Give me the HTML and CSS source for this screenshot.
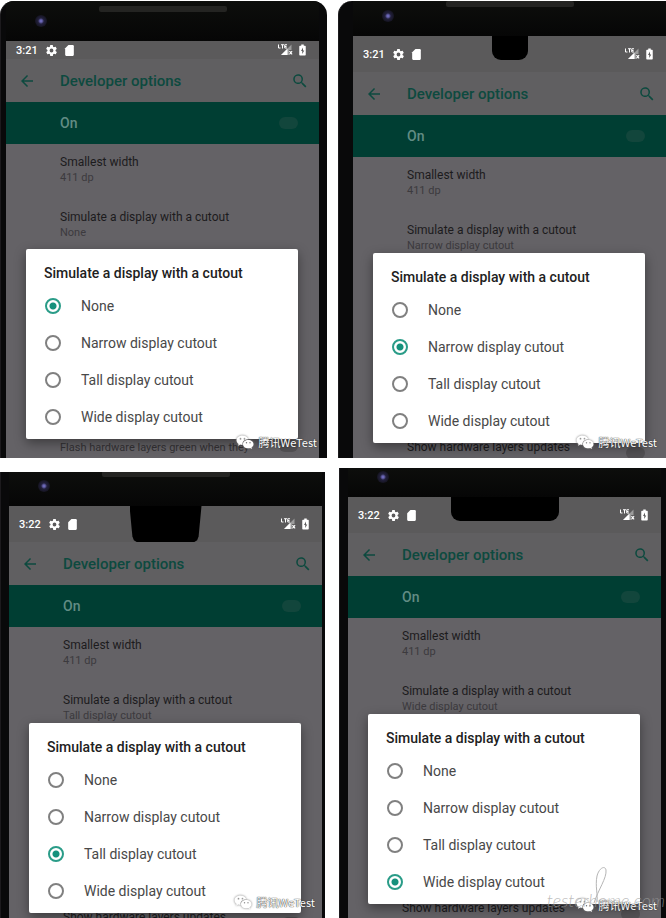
FILE: index.html
```html
<!DOCTYPE html>
<html lang="en">
<head>
<meta charset="UTF-8" />
<meta name="viewport" content="width=device-width, initial-scale=1" />
<title>Simulate a display with a cutout</title>
<link rel="stylesheet" href="styles.css">
</head>
<body>
  <svg class="sprite" aria-hidden="true">
    <symbol id="gear" viewBox="0 0 24 24"><path fill-rule="evenodd" d="M19.4 13a7.500 7.500 0 0 0 0-2l2.100-1.600a.5.5 0 0 0 .1-.6l-2-3.500a.5.5 0 0 0-.6-.2l-2.500 1a7.300 7.300 0 0 0-1.700-1L14.500 2.400A.5.5 0 0 0 14 2h-4a.5.5 0 0 0-.5.400L9.100 5.100a7.700 7.700 0 0 0-1.700 1l-2.500-1a.5.5 0 0 0-.6.200l-2 3.500a.5.5 0 0 0 .1.600L4.600 11a8 8 0 0 0 0 2l-2.100 1.600a.5.5 0 0 0-.1.600l2 3.500c.1.200.4.300.6.200l2.500-1a7.300 7.300 0 0 0 1.700 1l.4 2.700c0 .2.200.4.500.4h4c.2 0 .4-.2.500-.4l.4-2.700a7.700 7.700 0 0 0 1.700-1l2.500 1c.2.100.5 0 .6-.2l2-3.500a.5.5 0 0 0-.1-.6zM12 15.500a3.500 3.500 0 1 1 0-7 3.500 3.500 0 0 1 0 7z"/></symbol>
    <symbol id="card" viewBox="0 0 24 24"><path d="M18 2h-8L4 8v12a2 2 0 0 0 2 2h12a2 2 0 0 0 2-2V4a2 2 0 0 0-2-2z"/></symbol>
    <symbol id="signal" viewBox="0 0 30 24"><path d="M1 1v7h4M6 1.500h6M9 1.500V9M18 1.500h-4.500V8H18M13.500 5H17" fill="none" stroke="currentColor" stroke-width="2"/><path d="M27 1v11h-5v10H6z" opacity=".4"/><path d="M19 9v13H6zM22 15l1.500-1.500 2 2 2-2L29 15l-2 2.500 2 2.500-1.500 1.500-2-2-2 2L22 20l2-2.500z"/></symbol>
    <symbol id="battery" viewBox="0 0 14 24"><path fill-rule="evenodd" d="M4.500 1h5v2.500H12q1.500 0 1.500 1.500v16.500q0 1.500-1.500 1.500H2Q.5 23 .5 21.500V5q0-1.500 1.500-1.500h2.500zM8 7l-4 7h2.500V20l4-7H8z"/></symbol>
    <symbol id="back" viewBox="0 0 24 24"><path d="M20 11H7.800l5.600-5.600L12 4l-8 8 8 8 1.400-1.400L7.800 13H20z"/></symbol>
    <symbol id="search" viewBox="0 0 24 24"><path d="M15.500 14h-.8l-.3-.3a6.500 6.500 0 1 0-.7.700l.3.300v.8l5 5 1.500-1.500zm-6 0a4.500 4.500 0 1 1 0-9 4.500 4.500 0 0 1 0 9z"/></symbol>
    <symbol id="wechat" viewBox="0 0 36 28"><path fill-rule="evenodd" d="M13 1C6 1 1 5.300 1 10.500c0 3 1.600 5.600 4.200 7.300L4 21.500l4.500-2.300q2 .6 4.500.6C12 13 17 8.500 24.500 8.500 23.300 4 18.500 1 13 1zM9 9a1.700 1.700 0 1 1 0-3.400A1.700 1.700 0 0 1 9 9zm8 0a1.700 1.700 0 1 1 0-3.400A1.700 1.700 0 0 1 17 9z"/><path fill-rule="evenodd" d="M24.500 10C18.500 10 14 13.700 14 18.300s4.500 8.300 10.500 8.300q2 0 3.700-.5l3.800 1.700-1-3c2.500-1.600 4-3.800 4-6.500 0-4.600-4.500-8.300-10.500-8.300zM21 17a1.400 1.400 0 1 1 0-2.800 1.400 1.400 0 0 1 0 2.800zm7 0a1.400 1.400 0 1 1 0-2.800 1.400 1.400 0 0 1 0 2.800z"/></symbol>
  </svg>

  <main class="phones" id="phones"></main>

<script>
  (function() {
    const options = ['None', 'Narrow display cutout', 'Tall display cutout', 'Wide display cutout'];
    const phones = [
      { id: 'none', time: '3:21', selected: 0, below: 'Flash hardware layers green when they' },
      { id: 'narrow', time: '3:21', selected: 1, below: 'Show hardware layers updates' },
      { id: 'tall', time: '3:22', selected: 2, below: 'Show hardware layers updates' },
      { id: 'wide', time: '3:22', selected: 3, below: 'Show hardware layers updates' }
    ];

    const icon = name => `<svg class="icon icon-${name}" aria-hidden="true"><use href="#${name}"/></svg>`;

    function renderOption(phone, label, i) {
      return `
        <label class="option">
          <input type="radio" name="cutout-${phone.id}" ${i === phone.selected ? 'checked' : ''}>
          <span>${label}</span>
        </label>`;
    }

    function renderPhone(phone) {
      return `
        <section class="phone phone-${phone.id}">
          <div class="bezel"><span class="camera"></span><span class="speaker"></span></div>
          <div class="screen">
            <div class="status-bar">
              <span class="time">${phone.time}</span>
              ${icon('gear')}${icon('card')}
              <span class="notch"></span>
              ${icon('signal')}${icon('battery')}
            </div>
            <header class="app-bar">
              <button class="icon-btn" aria-label="Back">${icon('back')}</button>
              <h1>Developer options</h1>
              <button class="icon-btn" aria-label="Search">${icon('search')}</button>
            </header>
            <label class="master">
              <span>On</span>
              <input type="checkbox" class="switch" checked>
            </label>
            <div class="settings">
              <div class="setting"><h2>Smallest width</h2><p>411 dp</p></div>
              <div class="setting"><h2>Simulate a display with a cutout</h2><p>${options[phone.selected]}</p></div>
              <label class="setting below"><span>${phone.below}</span><input type="checkbox" class="switch"></label>
            </div>
            <fieldset class="dialog">
              <legend>Simulate a display with a cutout</legend>
              ${options.map((label, i) => renderOption(phone, label, i)).join('')}
            </fieldset>
            <div class="brand">${icon('wechat')}<span>腾讯WeTest</span></div>
          </div>
          ${phone.id === 'wide' ? `
          <div class="site-mark">
            <svg class="swash" viewBox="0 0 16 38" aria-hidden="true"><path d="M1 37C5 24 14 12 13 4 12-1 6 2 4 10 2 20 5 29 4 36"/></svg>
            <span>testerhome.com</span>
          </div>` : ''}
        </section>`;
    }

    document.getElementById('phones').innerHTML = phones.map(renderPhone).join('');
  })();
</script>
</body>
</html>
```
FILE: styles.css
```css
/* Reset and base styles */
* {
  box-sizing: border-box;
}
body {
  margin: 0;
  background: #fff;
  font-family: Roboto, "Noto Sans CJK SC", sans-serif;
}
h1, h2, p {
  margin: 0;
  font-weight: 400;
}
button {
  padding: 0;
  border: none;
  background: none;
}
.sprite {
  display: none;
}
.icon {
  flex: none;
  fill: currentColor;
}

/* Phones */
.phones {
  display: grid;
  grid-template-columns: 327fr 328fr;
  grid-template-rows: 457fr 450fr;
  gap: 10px 11px;
  height: 100vh;
  padding-top: 1px;
}
.phone {
  position: relative;
  display: flex;
  flex-direction: column;
  min-height: 0;
  overflow: hidden;
  background: #09090a;
  border-left: 1px solid #1c1a1d;
}
.phone-none {
  padding: 0 8px 0 5px;
  border-radius: 14px 14px 0 0;
}
.phone-narrow {
  padding-left: 14px;
  border-radius: 14px 0 0 0;
}
.phone-tall {
  margin: 4px 2px 0 0;
  padding: 0 3px 0 8px;
}
.phone-wide {
  margin-left: 1px;
  padding: 0 5px 0 8px;
}

/* Top bezel with the camera and the speaker */
.bezel {
  flex: none;
  position: relative;
  height: 40px;
  background: linear-gradient(#0d0e0c, #060606);
}
.phone-narrow .bezel {
  height: 35px;
}
.phone-tall .bezel {
  height: 34px;
}
.phone-wide .bezel {
  height: 29px;
}
.camera {
  position: absolute;
  left: 29px;
  bottom: 14px;
  width: 12px;
  height: 12px;
  border-radius: 50%;
  background: radial-gradient(circle, #6c68b8 0 1px, #22203c 3px, #151420 6px);
}
.speaker {
  position: absolute;
  left: 93px;
  bottom: 29px;
  width: 128px;
  height: 6px;
  border-radius: 2px;
  background: #242422;
}
.phone-wide .speaker {
  display: none;
}

/* Screen */
.screen {
  flex: 1;
  position: relative;
  min-height: 0;
  overflow: hidden;
  background: #646266;
}
.status-bar {
  position: relative;
  display: flex;
  align-items: center;
  height: 36px;
  padding: 0 13px 0 10px;
  background: #5b5a5b;
  color: #fff;
}
.phone-none .status-bar {
  height: 18px;
}
.time {
  width: 29px;
  font-size: 11px;
  font-weight: 500;
}
.icon-gear,
.icon-card {
  width: 13px;
  height: 13px;
}
.icon-card {
  margin: 0 auto 0 5px;
}
.icon-signal {
  width: 15px;
  height: 12px;
}
.icon-battery {
  width: 7px;
  height: 12px;
  margin-left: 6px;
}
.notch {
  position: absolute;
  top: 0;
  left: 50%;
  transform: translateX(-50%);
  background: #000;
}
.phone-narrow .notch {
  width: 36px;
  height: 24px;
  border-radius: 0 0 9px 9px;
}
.phone-tall .notch {
  width: 72px;
  height: 36px;
  clip-path: polygon(0 0, 100% 0, 96% 84%, 94% 95%, 90% 100%, 10% 100%, 6% 95%, 4% 84%);
}
.phone-wide .notch {
  width: 108px;
  height: 24px;
  border-radius: 0 0 9px 9px;
}
.app-bar {
  display: flex;
  align-items: center;
  height: 43px;
  padding: 0 10px 0 12px;
  background: #605f61;
  color: #0d4a3f;
}
.icon-btn {
  display: flex;
  color: inherit;
}
.icon-back,
.icon-search {
  width: 18px;
  height: 18px;
}
.app-bar h1 {
  flex: 1;
  margin-left: 24px;
  font-size: 15px;
  font-weight: 500;
}
.master {
  display: flex;
  align-items: center;
  justify-content: space-between;
  height: 42px;
  padding: 0 21px 0 54px;
  background: #003e33;
  color: #628c84;
  font-size: 14px;
  font-weight: 500;
}
.switch {
  appearance: none;
  width: 19px;
  height: 12px;
  margin: 0;
  border-radius: 6px;
  background: #12463c;
}

/* Settings list */
.settings {
  padding: 10px 21px 0 54px;
}
.setting {
  height: 55px;
  line-height: 16px;
}
.setting h2 {
  color: #1c1b1d;
  font-size: 12px;
}
.setting p {
  color: #3c3a3e;
  font-size: 11px;
}
.below {
  display: flex;
  justify-content: space-between;
  margin-top: 162px;
  color: #1c1b1d;
  font-size: 12px;
  white-space: nowrap;
}
.below .switch {
  margin-top: 8px;
  background: #525053;
}
.phone-none .below {
  margin-top: 176px;
  color: #333134;
  font-size: 11px;
}
.phone-none .below .switch {
  margin-top: 0;
}

/* Dialog */
.dialog {
  position: absolute;
  top: 217px;
  left: 20px;
  right: 21px;
  margin: 0;
  padding: 14px 18px 4px;
  border: none;
  border-radius: 2px;
  background: #fff;
  box-shadow: 0 4px 12px rgba(0, 0, 0, 0.4);
}
.phone-none .dialog {
  top: 208px;
}
.dialog legend {
  float: left;
  width: 100%;
  margin-bottom: 4px;
  padding: 0;
  color: #212121;
  font-size: 14px;
  font-weight: 500;
  line-height: 20px;
}
.option {
  clear: both;
  display: flex;
  align-items: center;
  gap: 19px;
  height: 37px;
  color: #484848;
  font-size: 14px;
}
.option input {
  appearance: none;
  width: 16px;
  height: 16px;
  margin: 0 1px;
  border: 2px solid #808080;
  border-radius: 50%;
}
.option input:checked {
  border-color: #2a9c88;
  background: radial-gradient(circle, #15917c 0 3px, transparent 4px);
}

/* Marks over the screens */
.brand {
  position: absolute;
  right: 2px;
  bottom: 7px;
  display: flex;
  align-items: center;
  gap: 5px;
  color: #fff;
  font-family: "Noto Sans CJK SC", sans-serif;
  font-size: 11px;
  line-height: 18px;
  text-shadow: 0 0 1px #333, 0 0 1px #333;
}
.phone-narrow .brand {
  right: 9px;
}
.phone-tall .brand {
  right: 7px;
}
.phone-wide .brand {
  right: 4px;
  bottom: 4px;
}
.icon-wechat {
  width: 18px;
  height: 14px;
  filter: drop-shadow(0 0 1px #777);
}
.site-mark {
  position: absolute;
  right: 1px;
  bottom: 8px;
  color: rgba(160, 160, 160, 0.7);
  font-family: Lato, sans-serif;
  font-size: 18px;
  font-style: italic;
  font-weight: 300;
  line-height: 20px;
}
.swash {
  position: absolute;
  left: 46px;
  bottom: 6px;
  width: 16px;
  height: 38px;
  fill: none;
  stroke: #b5b5b5;
}
```
